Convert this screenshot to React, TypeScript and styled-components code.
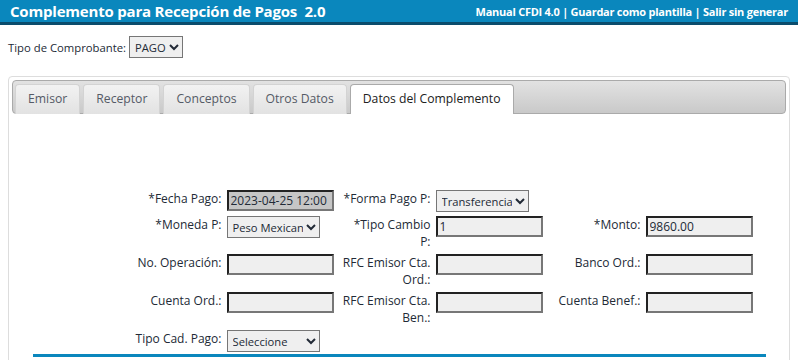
import React from "react";
import styled, { createGlobalStyle } from "styled-components";

const GlobalStyle = createGlobalStyle`
    body {
        margin: 0;
        font-family: "Open Sans", "Noto Sans", sans-serif;
        color: #222a36;
        background: #fff;
        overflow: hidden;
    }
`;

const Header = styled.div`
    display: flex;
    justify-content: space-between;
    align-items: center;
    height: 22px;
    padding: 0 10px 0 10px;
    background: #0a87bd;
    border-bottom: 3px solid #0b4c6c;
    color: #fff;
    .title {
        font-size: 15px;
        font-weight: 700;
        letter-spacing: -0.2px;
        white-space: pre;
    }
    .links {
        font-size: 11px;
        font-weight: 700;
        letter-spacing: -0.25px;
    }
`;

const TipoRow = styled.div`
    display: flex;
    align-items: center;
    gap: 3px;
    padding: 11px 8px 18px 8px;
    font-size: 11.3px;
`;

const Select = styled.select<{ $w: number }>`
    display: block;
    width: ${(p) => p.$w}px;
    height: 22px;
    font-family: "Open Sans", "Noto Sans", sans-serif;
    font-size: 11.2px;
    color: #222a36;
    background: #efefef;
    border: 1px solid #767676;
    border-radius: 0;
    padding: 0 0 0 1px;
    margin: 0;
`;

const Tabs = styled.div`
    margin: 0 8px;
    border: 1px solid #dddddd;
    border-radius: 4px;
    padding: 3px;
    height: 300px;
`;

const TabBar = styled.ul`
    display: flex;
    list-style: none;
    margin: 0;
    padding: 3px 2px 0;
    border: 1px solid #aaaaaa;
    border-radius: 4px;
    background: linear-gradient(#e2e2e2, #c9c9c9);
`;

const Tab = styled.li<{ $active?: boolean }>`
    margin: 0 3px -1px 0;
    padding: 5px 12px 6px;
    font-size: 12.2px;
    line-height: 17px;
    border: 1px solid ${(p) => (p.$active ? "#aaaaaa" : "#d3d3d3")};
    border-bottom: 0;
    border-radius: 4px 4px 0 0;
    background: ${(p) => (p.$active ? "#fff" : "linear-gradient(#f2f2f2, #e2e2e2)")};
    color: ${(p) => (p.$active ? "#212121" : "#555a66")};
    padding-bottom: ${(p) => (p.$active ? "7px" : "6px")};
`;

const Panel = styled.div`
    padding-top: 74px;
`;

const FormGrid = styled.div`
    display: grid;
    grid-template-columns: 192px 113px 96px 114px 96px 122px;
    width: 733px;
    margin: 0 auto;
    font-size: 12px;
`;

const Label = styled.div`
    text-align: right;
    white-space: nowrap;
    line-height: 17px;
    padding: 2px 3px 2px 2px;
`;

const Field = styled.div`
    padding: 2px;
`;

const TextInput = styled.input<{ $readonly?: boolean }>`
    display: block;
    box-sizing: border-box;
    width: 107px;
    height: 21px;
    margin: 0;
    padding: 0 2px;
    font-family: "Open Sans", "Noto Sans", sans-serif;
    font-size: 12px;
    color: #222a36;
    background: ${(p) => (p.$readonly ? "#c6c6c6" : "#efefef")};
    border: 2px solid;
    border-color: #222 #777 #777 #222;
`;

const Divider = styled.div`
    width: 733px;
    margin: 0 auto;
    border-top: 3px solid #0a87bd;
`;

const tabs = ["Emisor", "Receptor", "Conceptos", "Otros Datos", "Datos del Complemento"];

const App: React.FC = () => {
    return (
        <>
            <GlobalStyle />
            <Header>
                <span className="title">Complemento para Recepción de Pagos  2.0</span>
                <span className="links">Manual CFDI 4.0 | Guardar como plantilla | Salir sin generar</span>
            </Header>
            <TipoRow>
                Tipo de Comprobante:
                <Select $w={54} defaultValue="PAGO">
                    <option>PAGO</option>
                </Select>
            </TipoRow>
            <Tabs>
                <TabBar>
                    {tabs.map((t, i) => (
                        <Tab key={t} $active={i === tabs.length - 1}>
                            {t}
                        </Tab>
                    ))}
                </TabBar>
                <Panel>
                    <FormGrid>
                        <Label>*Fecha Pago:</Label>
                        <Field>
                            <TextInput $readonly readOnly defaultValue="2023-04-25 12:00" />
                        </Field>
                        <Label>*Forma Pago P:</Label>
                        <Field>
                            <Select $w={93} defaultValue="t">
                                <option value="t">Transferencia</option>
                            </Select>
                        </Field>
                        <div />
                        <div />

                        <Label>*Moneda P:</Label>
                        <Field>
                            <Select $w={93} defaultValue="mxn">
                                <option value="mxn">Peso Mexicano</option>
                            </Select>
                        </Field>
                        <Label>
                            *Tipo Cambio
                            <br />
                            P:
                        </Label>
                        <Field>
                            <TextInput defaultValue="1" />
                        </Field>
                        <Label>*Monto:</Label>
                        <Field>
                            <TextInput defaultValue="9860.00" />
                        </Field>

                        <Label>No. Operación:</Label>
                        <Field>
                            <TextInput />
                        </Field>
                        <Label>
                            RFC Emisor Cta.
                            <br />
                            Ord.:
                        </Label>
                        <Field>
                            <TextInput />
                        </Field>
                        <Label>Banco Ord.:</Label>
                        <Field>
                            <TextInput />
                        </Field>

                        <Label>Cuenta Ord.:</Label>
                        <Field>
                            <TextInput />
                        </Field>
                        <Label>
                            RFC Emisor Cta.
                            <br />
                            Ben.:
                        </Label>
                        <Field>
                            <TextInput />
                        </Field>
                        <Label>Cuenta Benef.:</Label>
                        <Field>
                            <TextInput />
                        </Field>

                        <Label>Tipo Cad. Pago:</Label>
                        <Field>
                            <Select $w={93} defaultValue="s">
                                <option value="s">Seleccione</option>
                            </Select>
                        </Field>
                    </FormGrid>
                    <Divider />
                </Panel>
            </Tabs>
        </>
    );
};

export default App;
